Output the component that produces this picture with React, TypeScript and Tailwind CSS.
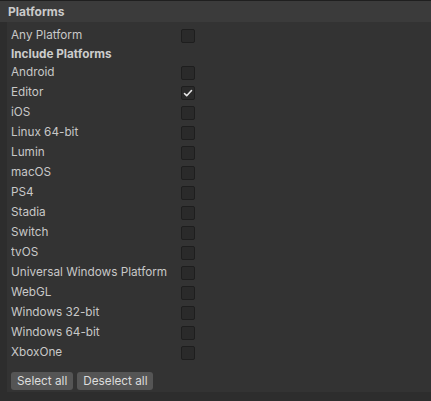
import { useState } from 'react';

const PLATFORMS = [
  'Android',
  'Editor',
  'iOS',
  'Linux 64-bit',
  'Lumin',
  'macOS',
  'PS4',
  'Stadia',
  'Switch',
  'tvOS',
  'Universal Windows Platform',
  'WebGL',
  'Windows 32-bit',
  'Windows 64-bit',
  'XboxOne',
];

function Toggle({ on, onClick }: { on: boolean; onClick: () => void }) {
  return (
    <button
      onClick={onClick}
      className="grid h-[14px] w-[14px] place-items-center rounded-[2px] border border-[#1e1e1e] bg-[#2a2a2a]"
    >
      {on && (
        <svg width="10" height="10" viewBox="0 0 10 10" fill="none">
          <path d="M1.5 5.5l2.2 2.2L8.5 2.5" stroke="#e6e6e6" strokeWidth="1.6" strokeLinecap="round" strokeLinejoin="round" />
        </svg>
      )}
    </button>
  );
}

function Row({ label, children }: { label: React.ReactNode; children?: React.ReactNode }) {
  return (
    <div className="flex h-[20px] items-center">
      <div className="w-[170px] truncate">{label}</div>
      {children}
    </div>
  );
}

export default function App() {
  const [any, setAny] = useState(false);
  const [sel, setSel] = useState<Record<string, boolean>>({ Editor: true });

  const setAll = (v: boolean) =>
    setSel(Object.fromEntries(PLATFORMS.map(p => [p, v])));

  return (
    <div
      className="flex h-[401px] w-[431px] flex-col border-t border-[#1f1f1f] bg-[#2d2d2d] text-[11.75px] text-[#c8c8c8]"
      style={{ fontFamily: 'Inter, "Noto Sans", sans-serif' }}
    >
      <div className="flex h-[21px] items-center bg-[#3b3b3b] px-[8px] text-[12px] font-bold text-[#cacaca]">Platforms</div>
      <div className="ml-[7px] flex h-[370px] flex-col bg-[#333333] pl-[4px] pt-[4px]">
        <Row label="Any Platform">
          <Toggle on={any} onClick={() => setAny(!any)} />
        </Row>
        <div className="flex h-[17px] items-center font-bold text-[#cccccc]">Include Platforms</div>
        {PLATFORMS.map(p => (
          <Row key={p} label={p}>
            <Toggle on={!!sel[p]} onClick={() => setSel({ ...sel, [p]: !sel[p] })} />
          </Row>
        ))}
        <div className="mt-[9px] flex gap-[4px]">
          <button
            onClick={() => setAll(true)}
            className="h-[18px] rounded-[3px] bg-[#555555] px-[6px] leading-[18px] text-[#dddddd]"
          >
            Select all
          </button>
          <button
            onClick={() => setAll(false)}
            className="h-[18px] rounded-[3px] bg-[#555555] px-[6px] leading-[18px] text-[#dddddd]"
          >
            Deselect all
          </button>
        </div>
      </div>
    </div>
  );
}
